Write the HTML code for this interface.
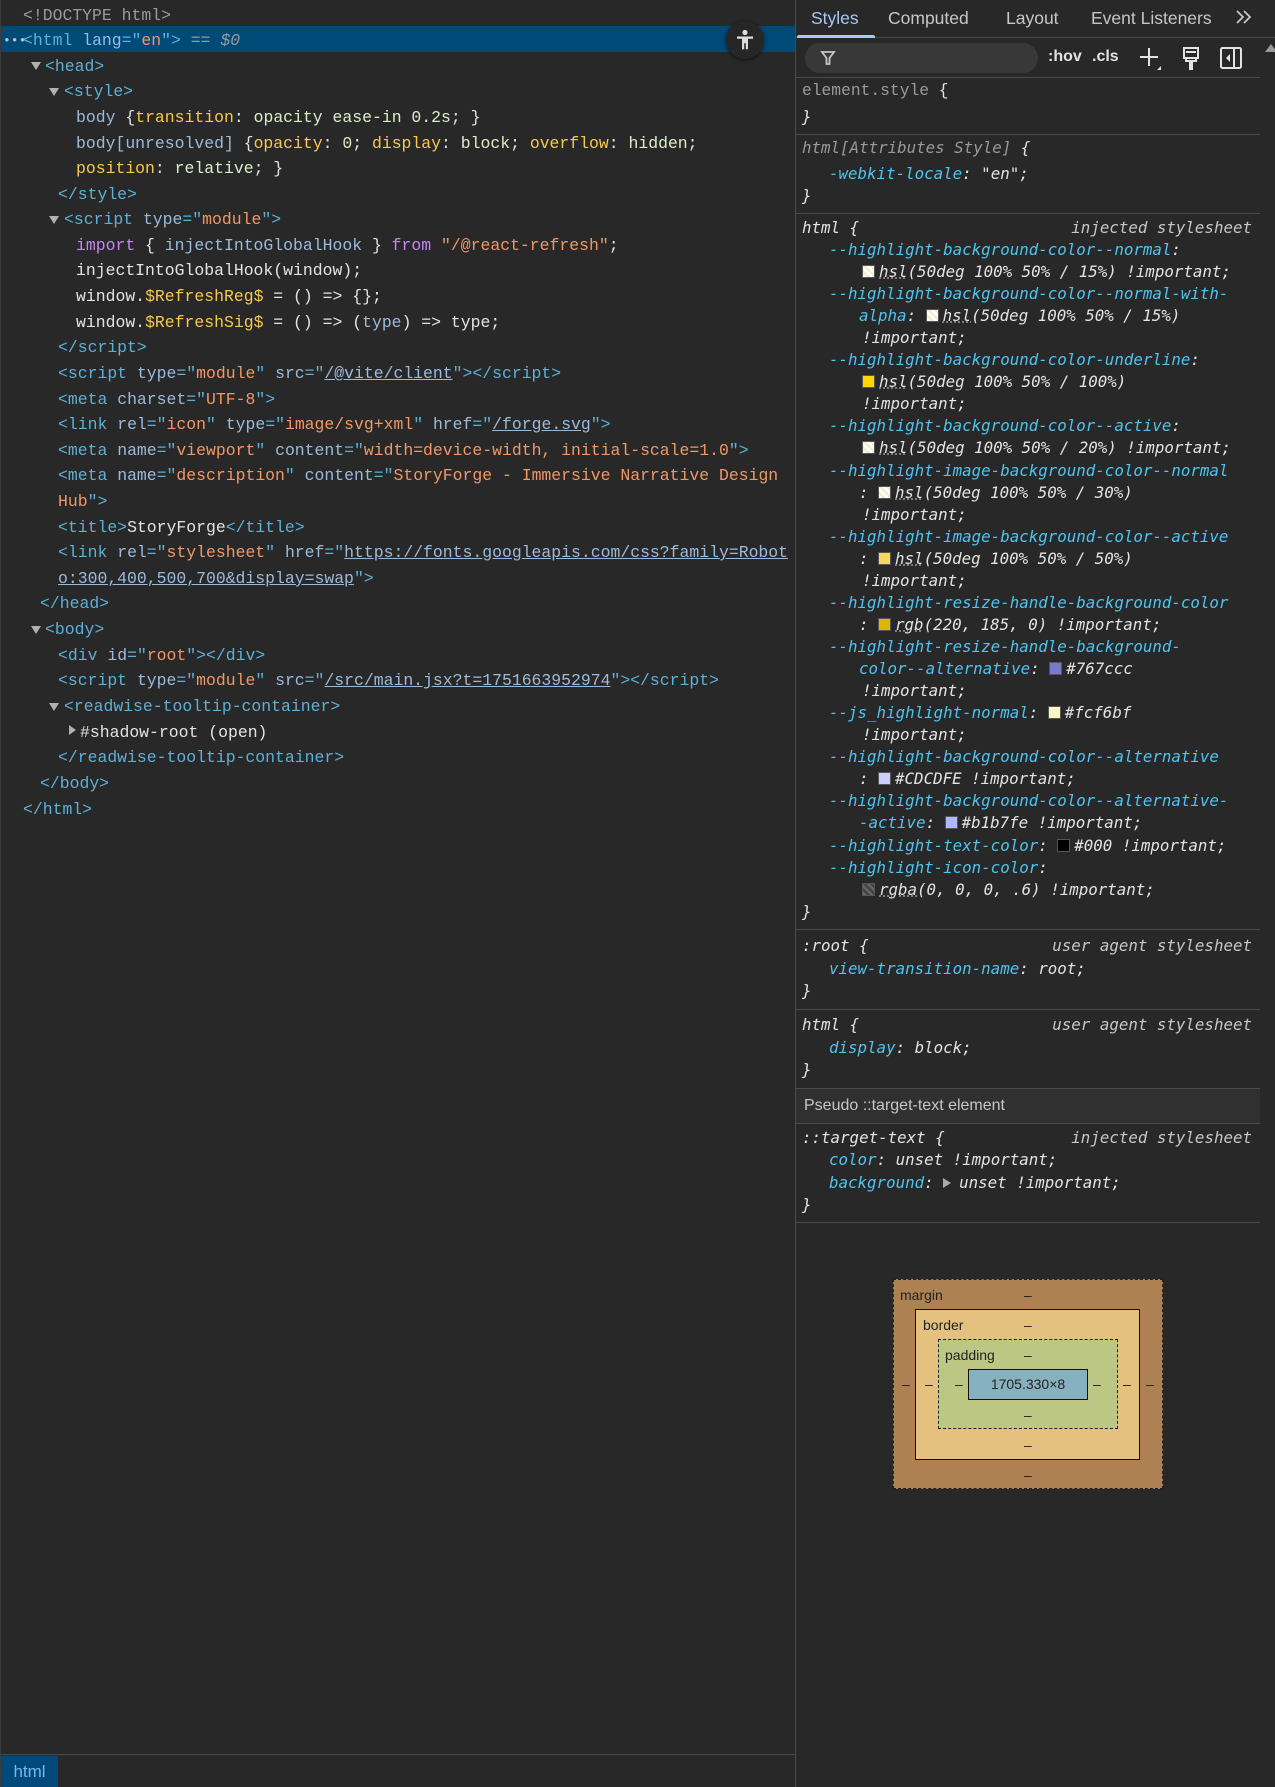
<!DOCTYPE html>
<html><head><meta charset="utf-8"><style>
*{margin:0;padding:0;box-sizing:border-box}
body{width:1275px;height:1787px;background:#282828;position:relative;overflow:hidden;font-family:"Liberation Mono",monospace;color:#e3e3e3}
.l{position:absolute;white-space:pre;font-size:16.45px;line-height:25.6px;height:25.6px;margin-top:2px}
.t{color:#5db0d7}.a{color:#9bbbdc}.v{color:#f29766}.p{color:#e3e3e3}.g{color:#9a9a9a}
.cp{color:#f7c94c}.cv{color:#dcedc8}.kw{color:#c586f0}.u{text-decoration:underline}
.tri{position:absolute;width:0;height:0;border-left:5px solid transparent;border-right:5px solid transparent;border-top:8px solid #b0b0b0;margin-top:2px}
.trir{position:absolute;width:0;height:0;border-top:5px solid transparent;border-bottom:5px solid transparent;border-left:7px solid #b0b0b0;margin-top:2px}
.r{position:absolute;white-space:pre;font-family:"DejaVu Sans Mono",monospace;font-style:oblique;font-size:15.8px;line-height:22px;height:22px;color:#e3e3e3}
.pn{color:#4ec4f0}
.sw{display:inline-block;width:13px;height:13px;border:1px solid #555;vertical-align:-1px;margin-right:4px}
.ck{background:linear-gradient(45deg,#f5eccc 25%,#fff 25%,#fff 50%,#f5eccc 50%,#f5eccc 75%,#fff 75%);background-size:7px 7px}
.dt{text-decoration:underline dotted #999}
.sep{position:absolute;left:796px;width:464px;height:1px;background:#4a4a4a}
.ua{position:absolute;right:23px;white-space:pre;font-family:"DejaVu Sans Mono",monospace;font-style:oblique;font-size:15.8px;color:#c7c7c7;line-height:22px}
.bm{position:absolute;font-family:"Liberation Sans",sans-serif;font-size:14px;color:#222}
.tab{position:absolute;top:8px;font-family:'Liberation Sans',sans-serif;font-size:17.5px;color:#c7c7c7}
</style></head><body>
<div style="position:absolute;left:0;top:26px;width:795px;height:26px;background:#004a77"></div>
<div class="l g" style="left:23px;top:1px">&lt;!DOCTYPE html&gt;</div>
<div class="l" style="left:3px;top:26px;color:#c0c0c0;font-size:13px">•••</div>
<div class="l" style="left:23px;top:26px"><span class="t">&lt;html</span> <span class="a">lang</span><span class="t">="</span><span class="v">en</span><span class="t">"&gt;</span> <span class="g">==</span> <span class="g" style="font-style:italic">$0</span></div>
<div style="position:absolute;left:726px;top:21px;width:38px;height:38px;border-radius:50%;background:#262626;box-shadow:0 1px 4px rgba(0,0,0,.6)"><svg width="38" height="38" viewBox="0 0 38 38"><circle cx="19" cy="11.5" r="2.6" fill="#ddd"/><path d="M11 15.5h16v2.2h-5v10.5h-2.2v-6h-1.6v6H16V17.7h-5z" fill="#ddd"/></svg></div>
<div class="tri" style="left:31px;top:60px"></div><div class="l t" style="left:45px;top:52px">&lt;head&gt;</div>
<div class="tri" style="left:49px;top:86px"></div><div class="l t" style="left:64px;top:77px">&lt;style&gt;</div>
<div class="l" style="left:76px;top:103px"><span class="a">body</span> {<span class="cp">transition</span>: <span class="cv">opacity ease-in 0.2s</span>; }</div>
<div class="l" style="left:76px;top:129px"><span class="a">body[unresolved]</span> {<span class="cp">opacity</span>: <span class="cv">0</span>; <span class="cp">display</span>: <span class="cv">block</span>; <span class="cp">overflow</span>: <span class="cv">hidden</span>;</div>
<div class="l" style="left:76px;top:154px"><span class="cp">position</span>: <span class="cv">relative</span>; }</div>
<div class="l t" style="left:58px;top:180px">&lt;/style&gt;</div>
<div class="tri" style="left:49px;top:214px"></div><div class="l" style="left:64px;top:205px"><span class="t">&lt;script</span> <span class="a">type</span><span class="t">="</span><span class="v">module</span><span class="t">"&gt;</span></div>
<div class="l" style="left:76px;top:231px"><span class="kw">import</span> { <span class="a">injectIntoGlobalHook</span> } <span class="kw">from</span> <span class="v">"/@react-refresh"</span>;</div>
<div class="l" style="left:76px;top:256px">injectIntoGlobalHook(window);</div>
<div class="l" style="left:76px;top:282px">window.<span class="cp">$RefreshReg$</span> = () =&gt; {};</div>
<div class="l" style="left:76px;top:308px">window.<span class="cp">$RefreshSig$</span> = () =&gt; (<span class="a">type</span>) =&gt; type;</div>
<div class="l t" style="left:58px;top:333px">&lt;/script&gt;</div>
<div class="l" style="left:58px;top:359px"><span class="t">&lt;script</span> <span class="a">type</span><span class="t">="</span><span class="v">module</span><span class="t">"</span> <span class="a">src</span><span class="t">="</span><span class="a u">/@vite/client</span><span class="t">"&gt;&lt;/script&gt;</span></div>
<div class="l" style="left:58px;top:385px"><span class="t">&lt;meta</span> <span class="a">charset</span><span class="t">="</span><span class="v">UTF-8</span><span class="t">"&gt;</span></div>
<div class="l" style="left:58px;top:410px"><span class="t">&lt;link</span> <span class="a">rel</span><span class="t">="</span><span class="v">icon</span><span class="t">"</span> <span class="a">type</span><span class="t">="</span><span class="v">image/svg+xml</span><span class="t">"</span> <span class="a">href</span><span class="t">="</span><span class="a u">/forge.svg</span><span class="t">"&gt;</span></div>
<div class="l" style="left:58px;top:436px"><span class="t">&lt;meta</span> <span class="a">name</span><span class="t">="</span><span class="v">viewport</span><span class="t">"</span> <span class="a">content</span><span class="t">="</span><span class="v">width=device-width, initial-scale=1.0</span><span class="t">"&gt;</span></div>
<div class="l" style="left:58px;top:461px"><span class="t">&lt;meta</span> <span class="a">name</span><span class="t">="</span><span class="v">description</span><span class="t">"</span> <span class="a">content</span><span class="t">="</span><span class="v">StoryForge - Immersive Narrative Design</span></div>
<div class="l" style="left:58px;top:487px"><span class="v">Hub</span><span class="t">"&gt;</span></div>
<div class="l" style="left:58px;top:513px"><span class="t">&lt;title&gt;</span>StoryForge<span class="t">&lt;/title&gt;</span></div>
<div class="l" style="left:58px;top:538px"><span class="t">&lt;link</span> <span class="a">rel</span><span class="t">="</span><span class="v">stylesheet</span><span class="t">"</span> <span class="a">href</span><span class="t">="</span><span class="a u">https://fonts.googleapis.com/css?family=Robot</span></div>
<div class="l" style="left:58px;top:564px"><span class="a u">o:300,400,500,700&amp;display=swap</span><span class="t">"&gt;</span></div>
<div class="l t" style="left:40px;top:589px">&lt;/head&gt;</div>
<div class="tri" style="left:31px;top:624px"></div><div class="l t" style="left:45px;top:615px">&lt;body&gt;</div>
<div class="l" style="left:58px;top:641px"><span class="t">&lt;div</span> <span class="a">id</span><span class="t">="</span><span class="v">root</span><span class="t">"&gt;&lt;/div&gt;</span></div>
<div class="l" style="left:58px;top:666px"><span class="t">&lt;script</span> <span class="a">type</span><span class="t">="</span><span class="v">module</span><span class="t">"</span> <span class="a">src</span><span class="t">="</span><span class="a u">/src/main.jsx?t=1751663952974</span><span class="t">"&gt;&lt;/script&gt;</span></div>
<div class="tri" style="left:49px;top:701px"></div><div class="l t" style="left:64px;top:692px">&lt;readwise-tooltip-container&gt;</div>
<div class="trir" style="left:69px;top:723px"></div><div class="l" style="left:80px;top:718px">#shadow-root (open)</div>
<div class="l t" style="left:58px;top:743px">&lt;/readwise-tooltip-container&gt;</div>
<div class="l t" style="left:40px;top:769px">&lt;/body&gt;</div>
<div class="l t" style="left:23px;top:795px">&lt;/html&gt;</div>
<div style="position:absolute;left:0;top:1754px;width:795px;height:1px;background:#4a4a4a"></div>
<div style="position:absolute;left:1px;top:1756px;width:57px;height:31px;background:#00497a;color:#7cb4f2;font-family:'Liberation Sans',sans-serif;font-size:17px;line-height:31px;text-align:center">html</div>
<div style="position:absolute;left:0;top:0;width:1px;height:1787px;background:#3c3c3c"></div>
<div style="position:absolute;left:795px;top:0;width:1px;height:1787px;background:#4a4a4a"></div>

<div style="position:absolute;left:796px;top:37px;width:479px;height:1px;background:#4a4a4a"></div>
<div style="position:absolute;left:797px;top:35px;width:78px;height:3px;background:#a8c7fa;border-radius:2px 2px 0 0"></div>
<div class="tab" style="left:811px;color:#a8c7fa">Styles</div>
<div class="tab" style="left:888px">Computed</div>
<div class="tab" style="left:1006px">Layout</div>
<div class="tab" style="left:1091px">Event Listeners</div>
<svg style="position:absolute;left:1235px;top:9px" width="18" height="16" viewBox="0 0 18 16"><path d="M2 2l6 6-6 6M9 2l6 6-6 6" stroke="#c7c7c7" stroke-width="1.8" fill="none"/></svg>
<div style="position:absolute;left:805px;top:43px;width:233px;height:30px;border-radius:15px;background:#383838"></div>
<svg style="position:absolute;left:820px;top:49px" width="16" height="18" viewBox="0 0 16 18"><path d="M2 3h12l-4.5 6v6h-3V9z" stroke="#c7c7c7" stroke-width="1.8" fill="none"/></svg>
<div style="position:absolute;top:48px;left:1048px;font-family:'Liberation Sans',sans-serif;font-size:16px;color:#e3e3e3;font-weight:bold">:hov</div>
<div style="position:absolute;top:48px;left:1092px;font-family:'Liberation Sans',sans-serif;font-size:16px;color:#e3e3e3;font-weight:bold">.cls</div>
<svg style="position:absolute;left:1138px;top:46px" width="26" height="26" viewBox="0 0 26 26"><path d="M11 2v18M2 11h18" stroke="#e3e3e3" stroke-width="2"/><path d="M19 24l4-4v4z" fill="#e3e3e3"/></svg>
<svg style="position:absolute;left:1181px;top:46px" width="20" height="26" viewBox="0 0 20 26"><path d="M3 2h14v10H3z M5 12v3h4v8h2v-8h4v-3" stroke="#e3e3e3" stroke-width="2" fill="none"/><path d="M5 6h10" stroke="#e3e3e3" stroke-width="2"/></svg>
<svg style="position:absolute;left:1219px;top:46px" width="24" height="24" viewBox="0 0 24 24"><rect x="2" y="2" width="20" height="20" rx="1.5" stroke="#e3e3e3" stroke-width="2" fill="none"/><path d="M15 2v20" stroke="#e3e3e3" stroke-width="2"/><path d="M11 8l-4 4 4 4z" fill="#e3e3e3"/></svg>
<div style="position:absolute;left:1265px;top:44px;width:0;height:0;border-left:6px solid transparent;border-right:6px solid transparent;border-bottom:8px solid #9a9a9a"></div>
<div class="sep" style="top:77px"></div>

<div class="r" style="left:802px;top:80px;font-style:normal;font-family:'Liberation Mono',monospace;font-size:16.3px;color:#9a9a9a">element.style <span style="color:#e3e3e3">{</span></div>
<div class="r" style="left:802px;top:106px">}</div>
<div class="sep" style="top:134px"></div>
<div class="r" style="left:802px;top:137px;color:#9a9a9a">html[Attributes Style] <span style="color:#e3e3e3">{</span></div>
<div class="r" style="left:829px;top:163px"><span class="pn">-webkit-locale</span>: "en";</div>
<div class="r" style="left:802px;top:185px">}</div>
<div class="sep" style="top:213px"></div>
<div class="r" style="left:802px;top:217px">html {</div><div class="ua" style="top:217px">injected stylesheet</div>
<div class="r" style="left:829px;top:239px"><span class="pn">--highlight-background-color--normal</span>:</div>
<div class="r" style="left:862px;top:261px"><span class="sw ck"></span><span class="dt">hsl</span>(50deg 100% 50% / 15%) !important;</div>
<div class="r" style="left:829px;top:283px"><span class="pn">--highlight-background-color--normal-with-</span></div>
<div class="r" style="left:859px;top:305px"><span class="pn">alpha</span>: <span class="sw ck"></span><span class="dt">hsl</span>(50deg 100% 50% / 15%)</div>
<div class="r" style="left:862px;top:327px">!important;</div>
<div class="r" style="left:829px;top:349px"><span class="pn">--highlight-background-color-underline</span>:</div>
<div class="r" style="left:862px;top:371px"><span class="sw" style="background:#ffd500"></span><span class="dt">hsl</span>(50deg 100% 50% / 100%)</div>
<div class="r" style="left:862px;top:393px">!important;</div>
<div class="r" style="left:829px;top:415px"><span class="pn">--highlight-background-color--active</span>:</div>
<div class="r" style="left:862px;top:437px"><span class="sw ck"></span><span class="dt">hsl</span>(50deg 100% 50% / 20%) !important;</div>
<div class="r" style="left:829px;top:460px"><span class="pn">--highlight-image-background-color--normal</span></div>
<div class="r" style="left:859px;top:482px">: <span class="sw ck" style="background-color:#f3dd88"></span><span class="dt">hsl</span>(50deg 100% 50% / 30%)</div>
<div class="r" style="left:862px;top:504px">!important;</div>
<div class="r" style="left:829px;top:526px"><span class="pn">--highlight-image-background-color--active</span></div>
<div class="r" style="left:859px;top:548px">: <span class="sw" style="background:#f5d760"></span><span class="dt">hsl</span>(50deg 100% 50% / 50%)</div>
<div class="r" style="left:862px;top:570px">!important;</div>
<div class="r" style="left:829px;top:592px"><span class="pn">--highlight-resize-handle-background-color</span></div>
<div class="r" style="left:859px;top:614px">: <span class="sw" style="background:#dcb900"></span><span class="dt">rgb</span>(220, 185, 0) !important;</div>
<div class="r" style="left:829px;top:636px"><span class="pn">--highlight-resize-handle-background-</span></div>
<div class="r" style="left:859px;top:658px"><span class="pn">color--alternative</span>: <span class="sw" style="background:#767ccc"></span>#767ccc</div>
<div class="r" style="left:862px;top:680px">!important;</div>
<div class="r" style="left:829px;top:702px"><span class="pn">--js_highlight-normal</span>: <span class="sw" style="background:#fcf6bf"></span>#fcf6bf</div>
<div class="r" style="left:862px;top:724px">!important;</div>
<div class="r" style="left:829px;top:746px"><span class="pn">--highlight-background-color--alternative</span></div>
<div class="r" style="left:859px;top:768px">: <span class="sw" style="background:#cdcdfe"></span>#CDCDFE !important;</div>
<div class="r" style="left:829px;top:790px"><span class="pn">--highlight-background-color--alternative-</span></div>
<div class="r" style="left:859px;top:812px"><span class="pn">-active</span>: <span class="sw" style="background:#b1b7fe"></span>#b1b7fe !important;</div>
<div class="r" style="left:829px;top:835px"><span class="pn">--highlight-text-color</span>: <span class="sw" style="background:#000"></span>#000 !important;</div>
<div class="r" style="left:829px;top:857px"><span class="pn">--highlight-icon-color</span>:</div>
<div class="r" style="left:862px;top:879px"><span class="sw" style="background:linear-gradient(45deg,#444 25%,#666 25%,#666 50%,#444 50%,#444 75%,#666 75%);background-size:7px 7px"></span><span class="dt">rgba</span>(0, 0, 0, .6) !important;</div>
<div class="r" style="left:802px;top:901px">}</div>
<div class="sep" style="top:929px"></div>
<div class="r" style="left:802px;top:935px">:root {</div><div class="ua" style="top:935px">user agent stylesheet</div>
<div class="r" style="left:829px;top:958px"><span class="pn">view-transition-name</span>: root;</div>
<div class="r" style="left:802px;top:980px">}</div>
<div class="sep" style="top:1009px"></div>
<div class="r" style="left:802px;top:1014px">html {</div><div class="ua" style="top:1014px">user agent stylesheet</div>
<div class="r" style="left:829px;top:1037px"><span class="pn">display</span>: block;</div>
<div class="r" style="left:802px;top:1059px">}</div>
<div class="sep" style="top:1088px"></div>
<div style="position:absolute;left:796px;top:1089px;width:464px;height:34px;background:#303030;font-family:'Liberation Sans',sans-serif;font-size:16px;color:#c7c7c7;line-height:34px;padding-left:8px">Pseudo ::target-text element</div>
<div class="sep" style="top:1123px"></div>
<div class="r" style="left:802px;top:1127px">::target-text {</div><div class="ua" style="top:1127px">injected stylesheet</div>
<div class="r" style="left:829px;top:1149px"><span class="pn">color</span>: unset !important;</div>
<div class="r" style="left:829px;top:1172px"><span class="pn">background</span>: <span style="display:inline-block;width:0;height:0;border-top:5px solid transparent;border-bottom:5px solid transparent;border-left:8px solid #aaa;margin-right:8px"></span>unset !important;</div>
<div class="r" style="left:802px;top:1194px">}</div>
<div class="sep" style="top:1222px"></div>

<div style="position:absolute;left:893px;top:1279px;width:270px;height:210px;background:#ae8152;border:1px dashed #222"></div>
<div style="position:absolute;left:915px;top:1309px;width:225px;height:151px;background:#e4c17f;border:1px solid #111"></div>
<div style="position:absolute;left:938px;top:1339px;width:180px;height:90px;background:#bbc783;border:1px dashed #222"></div>
<div style="position:absolute;left:968px;top:1369px;width:120px;height:31px;background:#87b1be;border:1px solid #111"></div>
<div class="bm" style="left:900px;top:1287px">margin</div>
<div class="bm" style="left:923px;top:1317px">border</div>
<div class="bm" style="left:945px;top:1347px">padding</div>
<div class="bm" style="left:968px;top:1376px;width:120px;text-align:center">1705.330×8</div>
<div class="bm" style="left:1024px;top:1287px">–</div>
<div class="bm" style="left:1024px;top:1317px">–</div>
<div class="bm" style="left:1024px;top:1347px">–</div>
<div class="bm" style="left:1024px;top:1407px">–</div>
<div class="bm" style="left:1024px;top:1437px">–</div>
<div class="bm" style="left:1024px;top:1467px">–</div>
<div class="bm" style="left:902px;top:1376px">–</div>
<div class="bm" style="left:925px;top:1376px">–</div>
<div class="bm" style="left:955px;top:1376px">–</div>
<div class="bm" style="left:1093px;top:1376px">–</div>
<div class="bm" style="left:1123px;top:1376px">–</div>
<div class="bm" style="left:1146px;top:1376px">–</div>
</body></html>
